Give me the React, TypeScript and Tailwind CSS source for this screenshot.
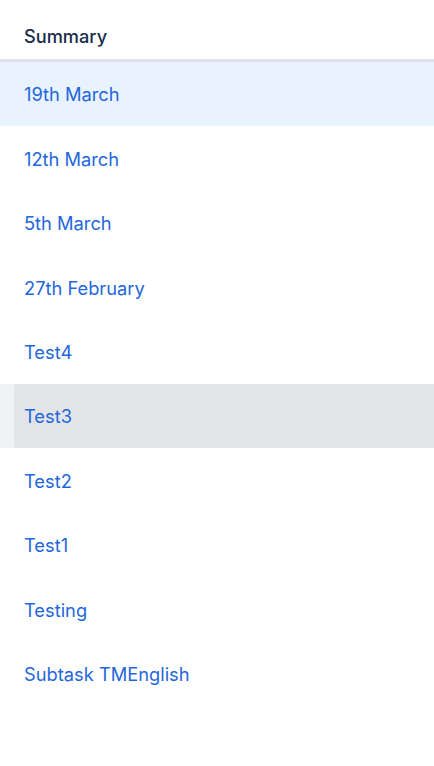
import React from "react";

const rows = [
  "19th March",
  "12th March",
  "5th March",
  "27th February",
  "Test4",
  "Test3",
  "Test2",
  "Test1",
  "Testing",
  "Subtask TMEnglish",
];

export default function App() {
  return (
    <div
      className="w-[434px] h-[766px] bg-white overflow-hidden"
      style={{ fontFamily: "Inter, 'Noto Sans', sans-serif" }}
    >
      <div className="h-[59px] flex items-center pl-[24px] pt-[14px] text-[18.2px] font-medium text-[#172b4d]">
        Summary
      </div>
      <div className="h-[3px] bg-[#dfe1e6]" />
      {rows.map((r, i) => {
        if (i === 0) {
          return (
            <div key={r} className="h-[64.4px] flex items-center pl-[24px] pt-[2px] bg-[#e9f2ff] text-[18.3px] text-[#1f67dc]">
              {r}
            </div>
          );
        }
        if (i === 5) {
          return (
            <div key={r} className="h-[64.4px] flex bg-[#f0f1f3]">
              <div className="flex-1 ml-[14px] rounded-l-[3px] bg-[#e3e4e8] flex items-center pl-[10px] pt-[2px] text-[18.3px] text-[#1f67dc]">
                {r}
              </div>
            </div>
          );
        }
        return (
          <div key={r} className="h-[64.4px] flex items-center pl-[24px] pt-[2px] text-[18.3px] text-[#1f67dc]">
            {r}
          </div>
        );
      })}
    </div>
  );
}
